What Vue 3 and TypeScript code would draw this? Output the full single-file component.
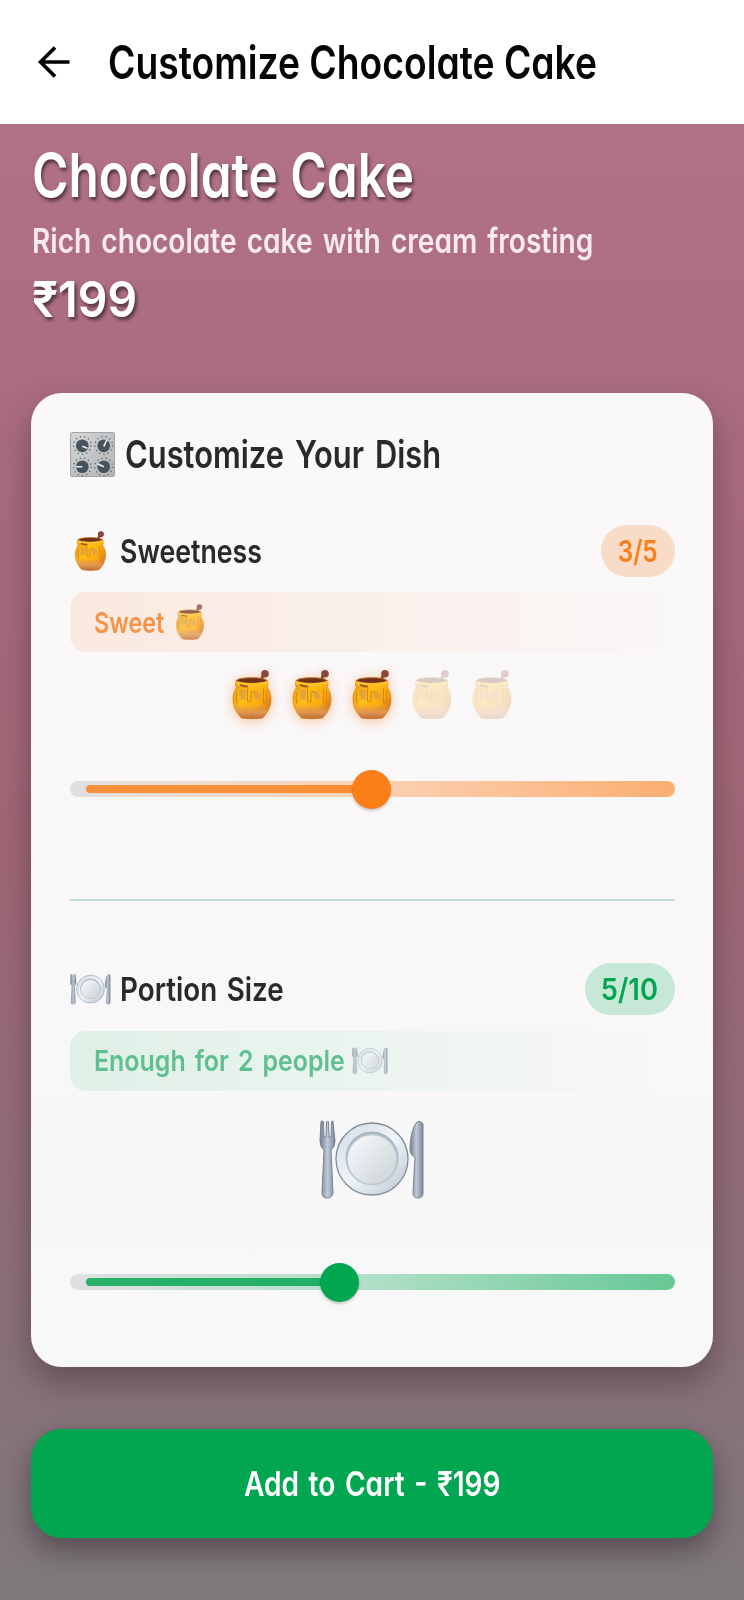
<script setup lang="ts">
interface Level {
  id: string
  title: string
  icon: string
  value: number
  max: number
  hint: string
  position: number
}
const levels: Level[] = [
  { id: 'sweet', title: 'Sweetness', icon: '#honey', value: 3, max: 5, hint: 'Sweet', position: 50 },
  { id: 'portion', title: 'Portion Size', icon: '#plate', value: 5, max: 10, hint: 'Enough for 2 people', position: 44.75 },
]
</script>

<template>
  <main class="screen">
    <svg class="defs" aria-hidden="true">
      <defs>
        <linearGradient id="gold" x1="0" y1="0" x2="1" y2=".6">
          <stop offset="0" stop-color="#ee9a14" /><stop offset=".45" stop-color="#ffbd14" /><stop offset=".8" stop-color="#fba80e" /><stop offset="1" stop-color="#d77b1c" />
        </linearGradient>
        <linearGradient id="amber" x1="0" y1="0" x2="0" y2="1">
          <stop offset="0" stop-color="#e0914e" stop-opacity="0" /><stop offset=".6" stop-color="#e09450" /><stop offset="1" stop-color="#bd6c35" />
        </linearGradient>
        <linearGradient id="silver" x1="0" y1="0" x2="1" y2="1">
          <stop offset="0" stop-color="#d3dae2" /><stop offset=".5" stop-color="#eef4f9" /><stop offset="1" stop-color="#b9c4d0" />
        </linearGradient>
        <linearGradient id="dish" x1="0" y1="0" x2="1" y2="1">
          <stop offset="0" stop-color="#fafcfc" /><stop offset="1" stop-color="#c9d0d5" />
        </linearGradient>
        <linearGradient id="steel" x1="0" y1="0" x2="1" y2="0">
          <stop offset="0" stop-color="#76808f" /><stop offset=".5" stop-color="#bfc9da" /><stop offset="1" stop-color="#7c8798" />
        </linearGradient>
        <linearGradient id="panel" x1="0" y1="0" x2="1" y2="1">
          <stop offset="0" stop-color="#d6d7d8" /><stop offset=".5" stop-color="#c3c5c6" /><stop offset="1" stop-color="#b2b4b6" />
        </linearGradient>
      </defs>
      <symbol id="honey" viewBox="0 0 40 50">
        <path d="M28.500 12 31.500 5" stroke="#75362d" stroke-width="2.600" />
        <circle cx="33" cy="4.200" r="3.800" fill="#8b453c" />
        <path d="M4 11Q2.500 15 4.500 18C1.500 22 .8 27 1 31C1.500 38 5 44.500 9.500 48.500Q20 50 30.500 48.500C35 44.500 38.500 38 39 31C39.200 26 38 21 35 17.500Q37 15 35.500 11Z" fill="url(#gold)" stroke="#d0811f" stroke-width=".7" />
        <path d="M2 34Q20 38 38 34Q36.500 42 30.500 48.500Q20 50 9.500 48.500Q3.500 42 2 34Z" fill="url(#amber)" />
        <ellipse cx="19.700" cy="11" rx="15" ry="2.800" fill="#713019" stroke="#b3702c" stroke-width="1" />
        <path d="M5 13.500Q19 17 34.500 13.500" stroke="#ffc22a" stroke-width="3.200" fill="none" stroke-linecap="round" />
        <path d="M8 15.500q4 1.500 8 1.500" stroke="#a35f20" stroke-width="2" fill="none" />
        <path d="M22 22l4-1 3 8-4 1-4-3ZM8 20l6 1v9H8.500Z" fill="#d39a55" opacity=".6" />
        <path d="M15.500 19v12q2 3 3.500 0v-8q2-3 4 1M31.500 19v14q1.800 2 3-1V20M5 23Q3.500 28 5 34" fill="none" stroke="#d68519" stroke-width="1.100" />
      </symbol>
      <symbol id="plate" viewBox="0 0 106 80">
        <path d="M2 1.500 1 21Q1 27 5 30L3 73Q3 78 8 78T14 73L12 30Q16 27 16 21L14 1.500Q13 0 12.500 2L12 17H10L9.500 2Q8.500 0 7.500 2L7 17H5L4.500 2Q3.500 0 2 1.500Z" fill="url(#steel)" stroke="#79838f" stroke-width="1" />
        <circle cx="53" cy="39" r="36" fill="url(#silver)" stroke="#808d99" stroke-width="1.300" />
        <circle cx="53" cy="38" r="26.500" fill="#a8b5bf" />
        <circle cx="53" cy="39.500" r="25" fill="url(#dish)" stroke="#bac7cf" stroke-width="1.500" />
        <path d="M104 4Q102 0 98 2C93 7 91 20 91 30Q91 35 96 37L94 73Q94 78 99 78T104 73Z" fill="url(#steel)" stroke="#79838f" stroke-width="1" />
      </symbol>
      <symbol id="knobs" viewBox="0 0 44 44">
        <rect x=".5" y=".5" width="43" height="43" rx="2.500" fill="url(#panel)" stroke="#a2a4a5" />
        <g fill="none" stroke="#59636a" stroke-width="1.300" stroke-dasharray="1.200 3">
          <circle cx="12" cy="13" r="8.600" /><circle cx="33" cy="13" r="8.600" />
          <circle cx="12" cy="34" r="8.600" /><circle cx="33" cy="34" r="8.600" />
        </g>
        <g fill="#47535d">
          <circle cx="12" cy="13.500" r="6.200" /><circle cx="33" cy="13.500" r="6.200" />
          <circle cx="12" cy="34" r="6.200" /><circle cx="33" cy="34" r="6.200" />
        </g>
        <path d="m12 14 5 2m16-2 3-6M12 34H6m27 0-6-3" stroke="#f2f5f6" stroke-width="1.600" />
      </symbol>
    </svg>

    <header class="bar">
      <svg class="back" viewBox="0 0 32 32" aria-label="Back">
        <path d="M31.500 16H2.500M17 1.500 2.500 16 17 30.500" fill="none" stroke="#000" stroke-width="3.700" />
      </svg>
      <h1 class="bar-title"><span class="fit fit-bar">Customize Chocolate Cake</span></h1>
    </header>

    <section class="intro">
      <h2 class="name"><span class="fit fit-name">Chocolate Cake</span></h2>
      <p class="about"><span class="fit fit-about">Rich chocolate cake with cream frosting</span></p>
      <p class="price"><span class="fit fit-price">₹199</span></p>
    </section>

    <section class="card">
      <h3 class="card-title">
        <svg class="knobs"><use href="#knobs" /></svg>
        <span class="fit fit-card">Customize Your Dish</span>
      </h3>
      <article v-for="level in levels" :key="level.id" class="level" :class="level.id">
        <div class="head">
          <svg class="head-icon"><use :href="level.icon" /></svg>
          <h4 class="head-title"><span class="fit fit-head">{{ level.title }}</span></h4>
          <span class="badge"><span class="badge-text">{{ level.value }}/{{ level.max }}</span></span>
        </div>
        <div class="hint">
          <span class="hint-text"><span class="fit fit-hint">{{ level.hint }}</span></span>
          <svg class="hint-icon"><use :href="level.icon" /></svg>
        </div>
        <div class="visual">
          <template v-if="level.id === 'sweet'">
            <svg v-for="n in level.max" :key="n" class="pot" :class="{ off: n > level.value }"><use href="#honey" /></svg>
          </template>
          <svg v-else class="big-plate"><use href="#plate" /></svg>
        </div>
        <div class="slider">
          <div class="fill" :style="{ width: `calc(${level.position}% - 16px)` }"></div>
          <div class="thumb" :style="{ left: level.position + '%' }"></div>
        </div>
      </article>
    </section>

    <button class="cart"><span class="cart-text">Add to Cart - ₹199</span></button>
  </main>
</template>

<style>
body { margin: 0; }
</style>

<style scoped>
* { box-sizing: border-box; }
.screen {
  width: 744px; height: 1600px; overflow: hidden;
  font-family: Inter, "Noto Sans", sans-serif;
  font-feature-settings: "cv11" 1;
  background: linear-gradient(180deg, #b27286 124px, #aa6c7f 400px, #9f6676 860px, #8b6f79 1300px, #7f7a7c 1600px);
}
.defs { position: absolute; width: 0; height: 0; }
h1, h2, h3, h4, p { margin: 0; font-weight: inherit; }
.fit, .badge-text, .cart-text { display: inline-block; white-space: nowrap; transform-origin: 0 50%; }
.bar { height: 124px; background: #fff; display: flex; align-items: center; padding-left: 38px; }
.back { width: 32px; height: 32px; margin-right: 38px; flex: none; }
.bar-title { font-size: 46px; line-height: 60px; font-weight: 600; color: #050505; padding-bottom: 1px; }
.fit-bar { transform: scaleX(.81); }
.intro { height: 269px; padding: 17px 32px 0; color: #fff; white-space: nowrap; }
.name { font-size: 61px; line-height: 68px; font-weight: 600; text-shadow: 2px 3px 4px rgba(0, 0, 0, .55); }
.fit-name { transform: scaleX(.811); }
.about { font-size: 34px; line-height: 46px; margin-top: 9px; font-weight: 600; color: #faeaf0; word-spacing: 3.700px; }
.fit-about { transform: scaleX(.826); }
.price { font-size: 50px; line-height: 60px; margin-top: 5px; font-weight: 600; text-shadow: 2px 3px 4px rgba(0, 0, 0, .55); }
.fit-price { transform: scaleX(.93); }
.card {
  margin: 0 31px; height: 974px; border-radius: 31px; padding: 39px 38.5px 0;
  background: linear-gradient(#faf8f9, #f9f7f8 60%, #f8f8f8);
  box-shadow: 0 16px 32px rgba(40, 25, 30, .38);
}
.card-title { height: 45px; display: flex; align-items: center; font-size: 38px; line-height: 46px; font-weight: 600; color: #29282a; }
.knobs { width: 45px; height: 45px; margin-right: 10px; flex: none; }
.fit-card { transform: scaleX(.812); margin-top: -1px; word-spacing: 4px; }
.level { color: #29282a; }
.sweet { margin-top: 48px; height: 376px; border-bottom: 2px solid #bddfcf; --tone: #fb7f19; --soft: #f9dcc8; --hint: #f7944b; }
.portion { margin-top: 62px; --tone: #02a651; --soft: #c7e8d7; --hint: #5fbf8f; }
.head { display: flex; align-items: center; height: 52px; }
.head-icon { width: 41px; height: 40px; margin-right: 9px; flex: none; }
.portion .head-icon { height: 31px; }
.head-title { font-size: 33px; line-height: 44px; font-weight: 600; word-spacing: 3px; }
.fit-head { transform: scaleX(.81); }
.portion .fit-head { transform: scaleX(.842); }
.badge {
  margin-left: auto; width: 74px; height: 52px; border-radius: 26px; background: var(--soft);
  display: flex; align-items: center; justify-content: center; color: var(--tone); font-size: 30px; font-weight: 600;
}
.portion .badge { width: 90px; }
.badge-text { transform: scaleX(.81); transform-origin: 50% 50%; }
.portion .badge-text { transform: scaleX(.91); }
.hint { height: 60px; margin-top: 15px; border-radius: 16px; padding-left: 24px; display: flex; align-items: center; color: var(--hint); }
.portion .hint { margin-top: 16px; padding-bottom: 1px; }
.sweet .hint { background: linear-gradient(90deg, #fae9df, #faf7f8); }
.portion .hint { background: linear-gradient(90deg, #dff0e7, #f9f8f9); }
.hint-text { width: 78px; font-size: 29px; font-weight: 600; word-spacing: 3.200px; }
.portion .hint-text { width: 258px; }
.fit-hint { transform: scaleX(.805); }
.portion .fit-hint { transform: scaleX(.86); }
.hint-icon { width: 36px; height: 36px; opacity: .75; }
.portion .hint-icon { height: 28px; }
.visual { height: 124px; padding-top: 17px; display: flex; justify-content: center; gap: 20px; }
.pot { width: 40px; height: 51px; filter: drop-shadow(0 2px 6px rgba(255, 125, 25, .42)); }
.pot.off { filter: none; opacity: .23; }
.portion .visual { height: 178px; padding-top: 29px; }
.big-plate { width: 106px; height: 80px; }
.slider { height: 16px; margin-top: 5px; border-radius: 8px; position: relative; padding: 4px 0 4px 16px; }
.sweet .slider { background: linear-gradient(90deg, #e0e0e0, #fbd2b5 50%, #fbae70); }
.portion .slider { background: linear-gradient(90deg, #e0e0e0, #b0dfc7 50%, #67c895); }
.fill { height: 8px; border-radius: 4px; background: var(--tone); opacity: .82; }
.thumb { position: absolute; top: -11px; width: 39px; height: 39px; margin-left: -20px; border-radius: 50%; background: var(--tone); box-shadow: 0 2px 3px rgba(0, 0, 0, .2); }
.cart {
  display: flex; align-items: center; justify-content: center; width: 682px; height: 109px; margin: 62px 31px 0; padding: 0 0 1px;
  border: 0; border-radius: 31px; background: #02a651; color: #fff;
  font: 600 34px Inter, "Noto Sans", sans-serif; font-feature-settings: "cv11" 1; word-spacing: 3px;
  box-shadow: 0 12px 28px rgba(20, 15, 20, .42);
}
.cart-text { transform: scaleX(.826); transform-origin: 50% 50%; }
</style>
